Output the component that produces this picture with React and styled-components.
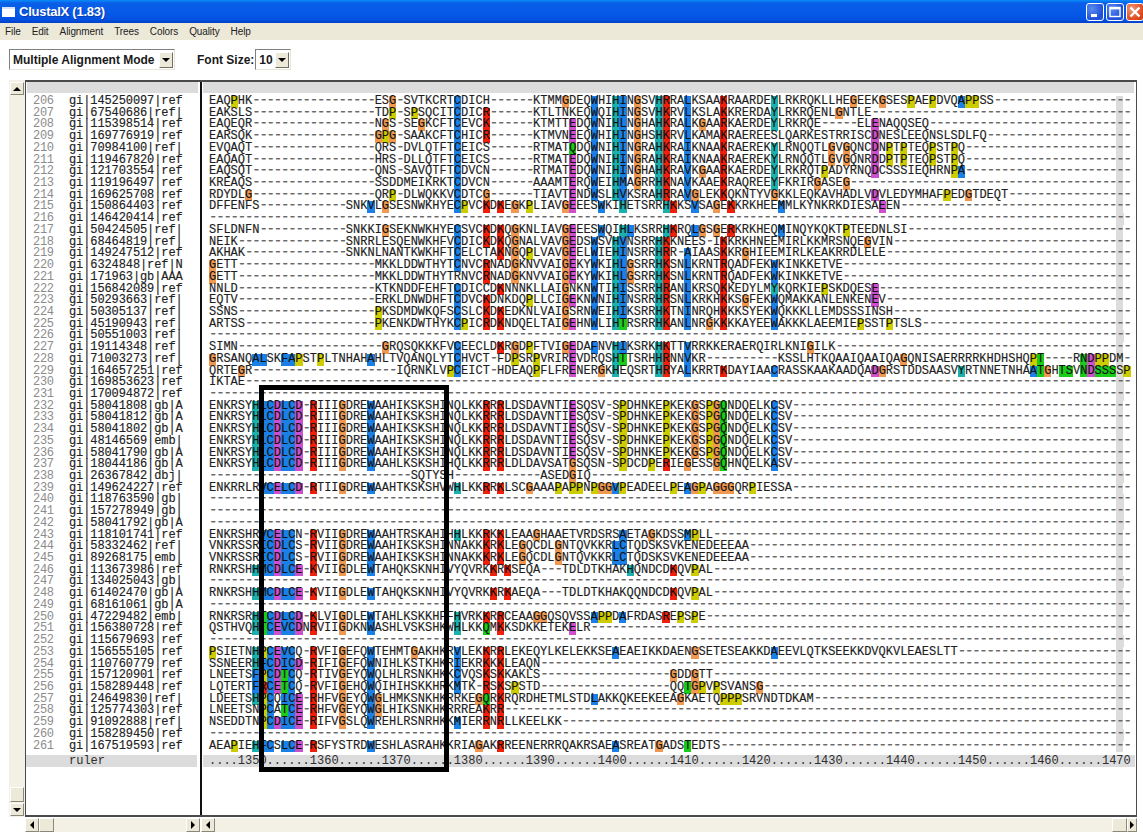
import React from "react";
import styled, { createGlobalStyle } from "styled-components";

const COLUMNS = 128;
const BAND_COLUMN = 126;
const FIRST_ROW = 206;

// lowercase = residue with a background colour, a number = run of gaps
const rows = [
  ["gi|145250097|ref", "EAQpHK17ESg1SVTKCRTcDICH6KTMMgDEQwHIhiNgSVhrRAlKSAAkRAARDEyLRKRQKLLHEgEEKgSESpAEpDVQappSS"],
  ["gi|67540686|ref|", "EAKSLS17TDp1SpSQCITcDICr6KTLTNKEQwQIhiNgSVhkRVlKSLAkKRERDAyLRKRQENLgNTLE"],
  ["gi|115398514|ref", "EAQEQR17NgS1SEgKCFTcEVCk6KTMTTeDQwNIhlNgHAhkRAlKgAArKAERDEyLRKRQE5ELeNAQQSEQ"],
  ["gi|169776919|ref", "EARSQK17gpg1SAAKCFTcHICr6KTMVNeEQwHIhiNgHShkRVlKAMAkRAEREESLQARKESTRRISCdNESLEEQNSLSDLFQ"],
  ["gi|70984100|ref|", "EVQAQT17QRS1DVLQTFTcEICS6RTMATqDQwNIhiNgRAhkRAiKNAAkRAEREKyLRNQQTLgVgQNCdNpTpTEQpSTpQ"],
  ["gi|119467820|ref", "EAQAQT17HRS1DLLQTFTcEICS6RTMATeDQwNIhiNgRAhkRAiKNAAkRAEREKyLRNQQTLgVgQNRdDpTpTEQpSTpQ"],
  ["gi|121703554|ref", "EAQSQT17QNS1SAVQTFTcDVCN6RTMATeDQwNIhiNgHAhkRAvKgAArKAERDEyLRKRQTpADYRNQdCSSSIEQHRNpa"],
  ["gi|119196497|ref", "KREAQS17SSDDMEIKRKTcDVCN6AAAMTeRQwEIhmAgRRhkNAvKAAEkRAQREEyFKRIRgASEg"],
  ["gi|169625708|ref", "RDYDLg17QRp1DLWQKKVcDTCg6TIAVTeNDwSLhvKSRAhrRAvgLEKkQKNTYVgKKLEQKAVHADLVdVLEDYMHAFpEDgTDEQT"],
  ["gi|150864403|ref", "DFFENFS12SNKvLgSESNWKHYEcpVCkDkEgKpLIAVgeEESwKIhETSRRhkKSvSAgEkKRKHEEmMLKYNKRKDIESAeEN"],
  ["gi|146420414|ref", ""],
  ["gi|50424505|ref|", "SFLDNFN12SNKKIgSEKNWKHYEcSVCkDkQgKNLIAVgeEESwQIhlKSRRhkRQlgSgErKRKHEQmINQYKQKTpTEEDNLSI"],
  ["gi|68464819|ref|", "NEIK15SNRRLESQENWKHFVcDICkDkQgNALVAVgeDSwSVhvNSRRhkKNEES1IkKRKHNEEMIRLKKMRSNQEgVIN"],
  ["gi|149247512|ref", "AKHAK14SNKNLNANTKWKHFTcELCTAkNgQpLVAVgeELwIEhiNSRRhrR1aIAASkKRgHIEEMIRLKEAKRRDLELE"],
  ["gi|6324848|ref|N", "gETT19MKKLDDWTHYTcNVCrNADgKNVVAIgeKYwKIhlgSRRhkSNlKRNTrQADFEKwKINKKETVE"],
  ["gi|171963|gb|AAA", "gETT19MKKLDDWTHYTRNVCrNADgKNVVAIgeKYwKIhlgSRRhkSNlKRNTrQADFEKwKINKKETVE"],
  ["gi|156842089|ref", "NNLD19KTKNDDFEHFTcDICCDkNNNKLLAIgNKNwTIhiSSRRhrANlKRSQkKEDYLMyKQRKIEpSKDQESe"],
  ["gi|50293663|ref|", "EQTV19ERKLDNWDHFTcDVCkDNKDQpLLCIgeKNwNIhiNSRRhrSNlKRKHkKSgFEKwQMAKKANLENKENeV"],
  ["gi|50305137|ref|", "SSNS19pKSDMDWKQFScSLCkDkEDKNLVAIgSRNwEIhiKSRRhkTNiNRQHkKKSYEKwQKKKLLEMDSSSINSH"],
  ["gi|45190943|ref|", "ARTSS18pKENKDWTHYKcpICrDkNDQELTAIgeHNwLIhtRSRRhkANlNRgKkKKAYEEwAKKKLAEEMIEpSSTpTSLS"],
  ["gi|50551003|ref|", ""],
  ["gi|19114348|ref|", "SIMN20gRQSQKKKFVcEECLDkRgDpFTVIgeDAfNVhiKSRKhkTTvRRKKERAERQIRLKNIgILK"],
  ["gi|71003273|ref|", "gRSANQalSKfapSTpLTNHAHaHLTVQANQLYTcHVCT1FDpSRpVRIReVDRQShtTSRHhrNNvKR10KSSLHTKQAAIQAAIQAgQNISAERRRRKHDHSHQpt4RndppDM"],
  ["gi|164657251|ref", "QRTEgR20IQRNKLVpcEICT1HDEAQpFLFReNERgKhEQSRThrYAlKRRTkDAYIAAcRASSKAAKAADQAdgRSTDDSAASVyRTNNETNHAatgHtsVndsssSp"],
  ["gi|169853623|ref", "IKTAE"],
  ["gi|170094872|ref", ""],
  ["gi|58041808|gb|A", "ENKRSYhlcdlcd1rIIIgDREwAAHIKSKSHINQLKKrRrLDSDAVNTIeSQSV1SpDHNKEpKEKgSpgqNDQELKcSV"],
  ["gi|58041812|gb|A", "ENKRSYhlcdlcd1rIIIgDREwAAHIKSKSHINQLKKrRrLDSDAVNTIeSQSV1SpDHNKEpKEKgSpgqNDQELKcSV"],
  ["gi|58041802|gb|A", "ENKRSYhlcdlcd1rIIIgDREwAAHIKSKSHINQLKKrRrLDSDAVNTIeSQSV1SpDHNKEpKEKgSpgqNDQELKcSV"],
  ["gi|48146569|emb|", "ENKRSYhlcdlcd1rIIIgDREwAAHIKSKSHINQLKKrRrLDSDAVNTIeSQSV1SpDHNKEpKEKgSpgqNDQELKcSV"],
  ["gi|58041790|gb|A", "ENKRSYhlcdlcd1rIIIgDREwAAHIKSKSHINQLKKrRrLDSDAVNTIeSQSV1SpDHNKEpKEKgSpgqNDQELKcSV"],
  ["gi|18044186|gb|A", "ENKRSYhlcdlcd1rIIIgDREwAAHLKSKSHIHQLKKrRrLDLDAVSATgSQSN1SpDCDpErIEgESSgqHNQELKaSV"],
  ["gi|26367842|dbj|", "28SQTYSH12ASEDgIQ"],
  ["gi|149624227|ref", "ENKRRLRvcelcd1rTIIgDREwAAHTKSKSHVWhLKKrRkLSCgAAApAppNpggvpEADEELpEagpAgggQRpIESSA"],
  ["gi|118763590|gb|", ""],
  ["gi|157278949|gb|", ""],
  ["gi|58041792|gb|A", ""],
  ["gi|118101741|ref", "ENKRSHRvcelcN1rVIIgDREwAAHTRSKAHIHhLKKrKkLEAAgHAAETVRDSRSaETAgKDSSmpLL"],
  ["gi|58332462|ref|", "VNKRSSRicdlcS1rVIIgDREwAAHIKSKSHINNAKKkRkLEgQCDLgNTQVKKRlcTQDSKSVKENEDEEEAA"],
  ["gi|89268175|emb|", "VNKRSSRicdlcS1rVIIgDREwAAHIKSKSHINNAKKkRkLEgQCDLgNTQVKKRlcTQDSKSVKENEDEEEAA"],
  ["gi|113673986|ref", "RNKRSHhmcdlce1kVIIgDLEwTAHQKSKNHIVYQVRKkRkSEQA3TDLDTKHAKhQNDCDkQVpAL"],
  ["gi|134025043|gb|", ""],
  ["gi|61402470|gb|A", "RNKRSHhmcdlce1kVIIgDLEwTAHQKSKNHIVYQVRKkRkAEQA3TDLDTKHAKQQNDCDkQVpAL"],
  ["gi|68161061|gb|A", ""],
  ["gi|47229482|emb|", "RNKRSRhtcdlcd1kLVIgDLEwTAHLKSKKHFFhVRKkRrCEAAggQSQVSSappDaFRDASrEpSpE"],
  ["gi|156380728|ref", "QSTHVQhtcevcdNrVIIgDKNwASHLVSKSHKWhLKKqMkKSDKKETEKeLR"],
  ["gi|115679693|ref", ""],
  ["gi|156555105|ref", "pSIETNhpcevcQ1rVFIgEFQwTEHMTgAKHKRvLEKkRrLEKEQYLKELEKKSEaEAEIKKDAENgSETESEAKKDaEEVLQTKSEEKKDVQKVLEAESLTT"],
  ["gi|110760779|ref", "SSNEERhfcdicd1rIFIgEFQwNIHLKSTKHKRiEKRkKkLEAQN"],
  ["gi|157120901|ref", "LNEETSfpcdtcQ1rTIVgEYQwQLHLRSNKHKKcVQSkSkKAKLS18gDDgTT"],
  ["gi|158289448|ref", "LQTERTfrcetcQ1rVFIgEHQwQIHIHSKKHRKmTK1rSkSpSTD18QQtgpVpSVANSg"],
  ["gi|24649830|ref|", "LDEETShpcQice1rHFVgEYQwgLHMKSNKHKRRKEgqRkRQRDHETMLSTDlAKKQKEEKEEAgKAETQpppSRVNDTDKAM"],
  ["gi|125774303|ref", "LNEETSNpcAtce1rHFVgEYQwgLHIKSNKHKRRREAkRr"],
  ["gi|91092888|ref|", "NSEDDTNpcdice1rIFVgSLQwREHLRSNRHKKmIERrNrLLKEELKK"],
  ["gi|158289450|ref", ""],
  ["gi|167519593|ref", "AEApIEhfcSlce1rSFYSTRDwESHLASRAHKKRIAgAKrREENERRRQAKRSAEaSREATgADStEDTS"],
];

const RULER = "...." + Array.from({ length: 13 }, (_, i) => `${1350 + i * 10}`).join("......");

const residueColours = {
  p: "#cccc00",
  g: "#f09850",
  a: "#1a80e6", c: "#1a80e6", f: "#1a80e6", i: "#1a80e6", l: "#1a80e6", m: "#1a80e6", v: "#1a80e6", w: "#1a80e6",
  r: "#f01f0a", k: "#f01f0a",
  h: "#1cb0ac", y: "#1cb0ac",
  d: "#cc50cc", e: "#cc50cc",
  q: "#18cc18", t: "#18cc18", n: "#18cc18", s: "#18cc18",
};

const expand = (code) =>
  code.replace(/\d+/g, (n) => "-".repeat(Number(n))).padEnd(COLUMNS, "-");

const renderRun = (text, keyBase) =>
  (text.match(/-+|[A-Z]+|[a-z]/g) || []).map((part, i) => {
    const key = `${keyBase}-${i}`;
    if (part[0] === "-") return <Gap key={key}>{part}</Gap>;
    if (part >= "a" && part <= "z") {
      return <Residue key={key} $colour={residueColours[part]}>{part.toUpperCase()}</Residue>;
    }
    return <span key={key}>{part}</span>;
  });

const Sequence = ({ code }) => {
  const full = expand(code);
  const band = full[BAND_COLUMN];
  return (
    <SeqRow>
      {renderRun(full.slice(0, BAND_COLUMN), "a")}
      <BandCell>{band === "-" ? <Gap>-</Gap> : band}</BandCell>
      {renderRun(full.slice(BAND_COLUMN + 1), "b")}
    </SeqRow>
  );
};

const Arrow = ({ dir }) => {
  const points = {
    up: "0,5 4,1 8,5",
    down: "0,1 8,1 4,5",
    left: "5,0 5,8 1,4",
    right: "1,0 1,8 5,4",
  };
  const vertical = dir === "up" || dir === "down";
  return (
    <svg width={vertical ? 8 : 6} height={vertical ? 6 : 8} viewBox={vertical ? "0 0 8 6" : "0 0 6 8"}>
      <polygon points={points[dir]} fill="#000" />
    </svg>
  );
};

const App = () => (
  <>
    <GlobalStyle />
    <Window>
      <TitleBar>
        <TitleIcon />
        <TitleText>ClustalX (1.83)</TitleText>
        <WindowButtons>
          <WindowButton>
            <svg width="11" height="11" viewBox="0 0 11 11"><rect x="1" y="8" width="6" height="3" fill="#fff" /></svg>
          </WindowButton>
          <WindowButton>
            <svg width="12" height="12" viewBox="0 0 12 12">
              <rect x="1" y="1.5" width="10" height="9" fill="none" stroke="#fff" strokeWidth="1.4" />
              <rect x="1" y="1" width="10" height="2.4" fill="#fff" />
            </svg>
          </WindowButton>
          <CloseButton>
            <svg width="12" height="12" viewBox="0 0 12 12">
              <path d="M1.5 1.5 L10.5 10.5 M10.5 1.5 L1.5 10.5" stroke="#fff" strokeWidth="2.4" />
            </svg>
          </CloseButton>
        </WindowButtons>
      </TitleBar>

      <MenuBar>
        {["File", "Edit", "Alignment", "Trees", "Colors", "Quality", "Help"].map((item) => (
          <MenuItem key={item}>{item}</MenuItem>
        ))}
      </MenuBar>

      <Toolbar>
        <ComboBox $width={166}>
          <ComboText>Multiple Alignment Mode</ComboText>
          <ComboButton><Arrow dir="down" /></ComboButton>
        </ComboBox>
        <FieldLabel>Font Size:</FieldLabel>
        <ComboBox $width={36}>
          <ComboText>10</ComboText>
          <ComboButton><Arrow dir="down" /></ComboButton>
        </ComboBox>
      </Toolbar>

      <Workspace>
        <VerticalBar>
          <ScrollButton $h={13}><Arrow dir="up" /></ScrollButton>
          <VerticalTrack />
          <ScrollThumb $h={15} />
          <ScrollButton $h={13}><Arrow dir="down" /></ScrollButton>
        </VerticalBar>

        <Panel>
          <NamesPane>
            <GreyHeader />
            <RowList>
              {rows.map(([name], i) => (
                <NameRow key={name}>
                  <RowNumber>{FIRST_ROW + i}</RowNumber>
                  <RowName>{name}</RowName>
                </NameRow>
              ))}
            </RowList>
            <RulerName>ruler</RulerName>
          </NamesPane>

          <SeqPane>
            <GreyHeader />
            <RowList>
              {rows.map(([name, code]) => (
                <Sequence key={name} code={code} />
              ))}
            </RowList>
            <RulerSeq>{RULER}</RulerSeq>
            <SelectionBox />
          </SeqPane>
        </Panel>
      </Workspace>

      <BottomBars>
        <BottomBar $width={175}>
          <ScrollButton $h={14} $w={14}><Arrow dir="left" /></ScrollButton>
          <ScrollThumb $h={14} $w={15} />
          <BarFill />
          <ScrollButton $h={14} $w={14}><Arrow dir="right" /></ScrollButton>
        </BottomBar>
        <BottomBar $width={936}>
          <ScrollButton $h={14} $w={14}><Arrow dir="left" /></ScrollButton>
          <BarFill />
          <ScrollThumb $h={14} $w={15} />
          <ScrollButton $h={14} $w={10}><Arrow dir="right" /></ScrollButton>
        </BottomBar>
      </BottomBars>
    </Window>
  </>
);

export default App;

// Styled Components
const GlobalStyle = createGlobalStyle`
  html, body {
    margin: 0;
    background: #fff;
    overflow: hidden;
  }
`;

const Window = styled.div`
  width: 1143px;
  height: 840px;
  display: flex;
  flex-direction: column;
  font-family: "Liberation Sans", Arial, sans-serif;
`;

const TitleBar = styled.div`
  height: 23px;
  flex: none;
  display: flex;
  align-items: center;
  padding-left: 2px;
  color: #fff;
  background: linear-gradient(180deg, #0a8cf8 0, #0a5fe8 3px, #0558e6 15px, #0450e0 20px, #0340c8 23px);
`;

const TitleIcon = styled.div`
  width: 13px;
  height: 8px;
  background: #fff;
  border-top: 2px solid #d8e4fa;
`;

const TitleText = styled.div`
  margin-left: 4px;
  font-size: 13px;
  font-weight: bold;
  letter-spacing: -0.25px;
  text-shadow: 1px 1px 0 #0a3bb0;
`;

const WindowButtons = styled.div`
  margin-left: auto;
  display: flex;
  gap: 2px;
  margin-right: -1px;
`;

const WindowButton = styled.div`
  width: 18px;
  height: 18px;
  box-sizing: border-box;
  display: flex;
  align-items: center;
  justify-content: center;
  border: 1px solid #fff;
  border-radius: 3px;
  background: radial-gradient(circle at 30% 30%, #5a8cf0, #1f4fd8 70%, #2a5ce0);
`;

const CloseButton = styled(WindowButton)`
  background: radial-gradient(circle at 30% 30%, #f09878, #e0481c 70%, #c83a10);
`;

const MenuBar = styled.div`
  height: 17px;
  flex: none;
  display: flex;
  align-items: center;
  gap: 11px;
  padding-left: 5px;
  background: #ece9d8;
`;

const MenuItem = styled.span`
  font-size: 10px;
  letter-spacing: -0.1px;
  color: #222;
`;

const Toolbar = styled.div`
  height: 40px;
  flex: none;
  box-sizing: border-box;
  display: flex;
  align-items: center;
  padding: 0 0 1px 9px;
`;

const ComboBox = styled.div`
  width: ${(p) => p.$width}px;
  height: 21px;
  box-sizing: border-box;
  display: flex;
  align-items: center;
  justify-content: space-between;
  padding: 0 1px 0 3px;
  border: 1px solid;
  border-color: #808080 #e8e6d8 #e8e6d8 #808080;
  background: #fff;
`;

const ComboText = styled.span`
  font-size: 12px;
  font-weight: bold;
  white-space: nowrap;
  color: #1a1a1a;
`;

const ComboButton = styled.div`
  width: 14px;
  height: 16px;
  flex: none;
  box-sizing: border-box;
  display: flex;
  align-items: center;
  justify-content: center;
  background: #ece9d8;
  border: 1px solid;
  border-color: #fff #716f64 #716f64 #fff;
`;

const FieldLabel = styled.span`
  margin-left: 22px;
  margin-right: 1px;
  font-size: 12px;
  font-weight: bold;
  color: #1a1a1a;
`;

const Workspace = styled.div`
  flex: none;
  height: 737px;
  display: flex;
  padding-left: 9px;
`;

const VerticalBar = styled.div`
  width: 16px;
  flex: none;
  display: flex;
  flex-direction: column;
  align-items: center;
  padding: 2px 1px 1px 0;
  box-sizing: border-box;
  gap: 1px;
  background: #f3f1e6;
`;

const VerticalTrack = styled.div`
  flex: 1;
`;

const ScrollButton = styled.div`
  width: ${(p) => p.$w || 14}px;
  height: ${(p) => p.$h}px;
  flex: none;
  box-sizing: border-box;
  display: flex;
  align-items: center;
  justify-content: center;
  background: #ece9d8;
  border: 1px solid;
  border-color: #fff #8a8878 #8a8878 #fff;
`;

const ScrollThumb = styled(ScrollButton)`
  width: ${(p) => p.$w || 14}px;
`;

const Panel = styled.div`
  width: 1112px;
  height: 100%;
  box-sizing: border-box;
  flex: none;
  display: flex;
  border: 1px solid #4a4a4a;
  border-top-width: 2px;
  border-bottom-width: 2px;
  background: #fff;
`;

const NamesPane = styled.div`
  width: 174px;
  flex: none;
  border-right: 2px solid #111;
  font-family: "Liberation Mono", "Courier New", monospace;
  font-size: 12px;
`;

const SeqPane = styled.div`
  position: relative;
  flex: 1;
  min-width: 0;
  font-family: "Liberation Mono", "Courier New", monospace;
  font-size: 12px;
`;

const GreyHeader = styled.div`
  height: 11px;
  margin: 0 2px 3px 1px;
  background: #dcdcdc;
`;

const RowList = styled.div`
  display: flex;
  flex-direction: column;
`;

const NameRow = styled.div`
  height: 11.72px;
  line-height: 11.72px;
  display: flex;
  white-space: pre;
`;

const RowNumber = styled.span`
  width: 43px;
  flex: none;
  padding-left: 7px;
  box-sizing: border-box;
  letter-spacing: -0.3px;
  color: #8c8c8c;
`;

const RowName = styled.span`
  letter-spacing: -0.1px;
  color: #222;
  -webkit-text-stroke: 0.15px #222;
`;

const RulerName = styled.div`
  height: 12px;
  line-height: 12px;
  margin: 3px 3px 0 0;
  padding-left: 43px;
  background: #dcdcdc;
  color: #2e2e2e;
`;

const SeqRow = styled.div`
  height: 11.72px;
  line-height: 11.72px;
  padding-left: 7px;
  white-space: pre;
  color: #1e1e1e;
  -webkit-text-stroke: 0.15px #1e1e1e;
`;

const Gap = styled.span`
  color: #6a6a6a;
  font-size: 14px;
  line-height: 0;
  letter-spacing: -1.2px;
`;

const Residue = styled.span`
  display: inline-block;
  width: 1ch;
  height: 11.72px;
  background: ${(p) => p.$colour};
  color: #111;
`;

const BandCell = styled.span`
  display: inline-block;
  width: 1ch;
  height: 11.72px;
  background: #dcdcdc;
`;

const RulerSeq = styled.div`
  height: 12px;
  line-height: 12px;
  margin: 3px 1px 0 1px;
  padding-left: 6px;
  white-space: pre;
  background: #dcdcdc;
  color: #2e2e2e;
`;

const SelectionBox = styled.div`
  position: absolute;
  left: 57px;
  top: 303px;
  width: 190px;
  height: 387px;
  box-sizing: border-box;
  border: 5px solid #000;
`;

const BottomBars = styled.div`
  flex: none;
  display: flex;
  padding: 1px 0 0 25px;
  gap: 1px;
`;

const BottomBar = styled.div`
  width: ${(p) => p.$width}px;
  height: 14px;
  display: flex;
  background: #f3f1e6;
`;

const BarFill = styled.div`
  flex: 1;
`;
